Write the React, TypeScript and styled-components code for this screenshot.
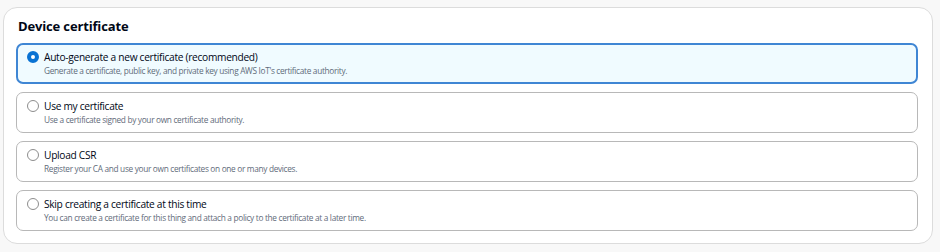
import { useState } from "react";
import styled, { createGlobalStyle } from "styled-components";

const GlobalStyle = createGlobalStyle`
  body {
    margin: 0;
    background: #f8f8f8;
    font-family: "Open Sans", "Noto Sans", sans-serif;
    color: #000716;
  }
`;

const Page = styled.div`
  padding: 7px 7px 8px 3px;
`;

const Container = styled.section`
  background: #ffffff;
  border: 1px solid #dcdcdc;
  border-radius: 14px;
  padding: 8px 14px 12px 12px;
`;

const Title = styled.h2`
  margin: 0 0 7px 2px;
  font-size: 13px;
  line-height: 20px;
  font-weight: 700;
  letter-spacing: -0.15px;
  color: #000716;
`;

const List = styled.div`
  display: flex;
  flex-direction: column;
  gap: 8px;
`;

const Card = styled.label<{ $selected: boolean }>`
  display: flex;
  align-items: flex-start;
  gap: 5px;
  border-radius: 7px;
  cursor: pointer;
  border: ${(p) => (p.$selected ? "2px solid #3f86d4" : "1px solid #b8b8b8")};
  background: ${(p) => (p.$selected ? "#f0fbff" : "#ffffff")};
  padding: ${(p) => (p.$selected ? "5px 9px" : "6px 10px")};
`;

const Radio = styled.span<{ $selected: boolean }>`
  flex: none;
  width: 12px;
  height: 12px;
  margin-top: 1px;
  box-sizing: border-box;
  border-radius: 50%;
  background: #ffffff;
  border: ${(p) => (p.$selected ? "4px solid #0972d3" : "1px solid #8d8d8d")};
`;

const Texts = styled.div`
  display: flex;
  flex-direction: column;
`;

const Label = styled.span`
  font-size: 10.2px;
  line-height: 15px;
  letter-spacing: -0.3px;
  color: #000716;
`;

const Description = styled.span`
  font-size: 8.3px;
  line-height: 12px;
  letter-spacing: -0.32px;
  color: #5f6b7a;
`;

const options = [
  {
    id: "auto",
    label: "Auto-generate a new certificate (recommended)",
    description:
      "Generate a certificate, public key, and private key using AWS IoT's certificate authority.",
  },
  {
    id: "own",
    label: "Use my certificate",
    description: "Use a certificate signed by your own certificate authority.",
  },
  {
    id: "csr",
    label: "Upload CSR",
    description:
      "Register your CA and use your own certificates on one or many devices.",
  },
  {
    id: "skip",
    label: "Skip creating a certificate at this time",
    description:
      "You can create a certificate for this thing and attach a policy to the certificate at a later time.",
  },
];

export default function App() {
  const [selected, setSelected] = useState("auto");
  return (
    <>
      <GlobalStyle />
      <Page>
        <Container>
          <Title>Device certificate</Title>
          <List>
            {options.map((o) => (
              <Card
                key={o.id}
                $selected={selected === o.id}
                onClick={() => setSelected(o.id)}
              >
                <Radio $selected={selected === o.id} />
                <Texts>
                  <Label>{o.label}</Label>
                  <Description>{o.description}</Description>
                </Texts>
              </Card>
            ))}
          </List>
        </Container>
      </Page>
    </>
  );
}
